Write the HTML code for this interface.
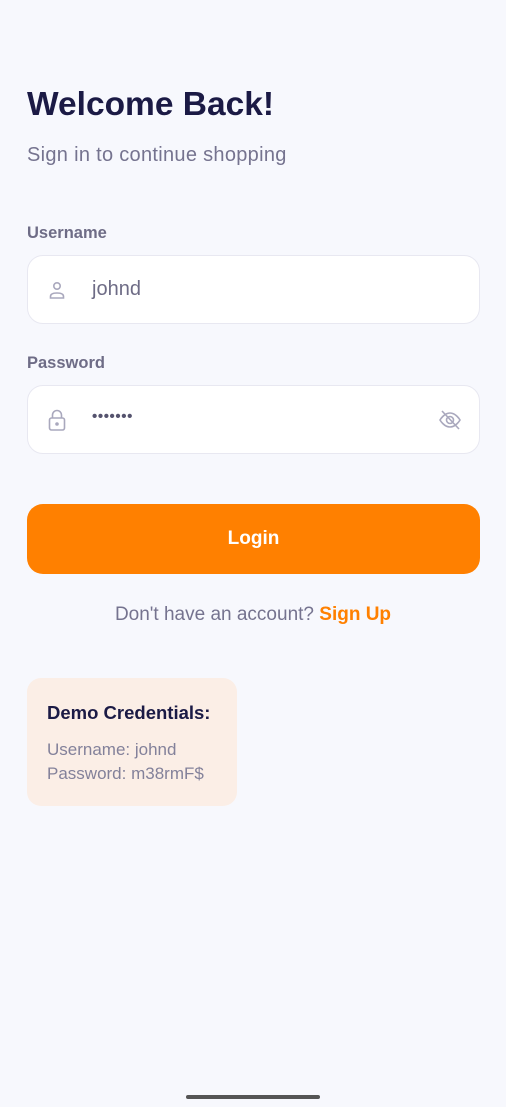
<!DOCTYPE html>
<html><head><meta charset="utf-8"><style>
*{margin:0;padding:0;box-sizing:border-box}
body{width:506px;height:1107px;background:#f7f8fd;font-family:"Liberation Sans",sans-serif;position:relative;overflow:hidden}
.a{position:absolute}
h1{position:absolute;left:27px;top:86px;font-size:33.5px;font-weight:bold;color:#1b1a45;letter-spacing:0px}
.sub{left:27px;top:144px;font-size:20px;color:#75738f;letter-spacing:0.3px}
.lbl{left:27px;font-size:16.5px;color:#6e6c86;font-weight:bold}
.box{left:27px;width:453px;height:69px;background:#fff;border:1px solid #e8e8f1;border-radius:16px}
.btn{left:27px;top:504px;width:453px;height:70px;background:#ff8000;border-radius:16px;color:#fff;font-weight:bold;font-size:19px;text-align:center;line-height:70px}
.card{left:27px;top:678px;width:210px;height:128px;background:#fbeee6;border-radius:14px}
</style></head><body>
<h1>Welcome Back!</h1>
<div class="a sub">Sign in to continue shopping</div>
<div class="a lbl" style="top:224px">Username</div>
<div class="a box" style="top:255px">
<svg class="a" style="left:19px;top:24px" width="20" height="20" viewBox="0 0 20 20" fill="none" stroke="#a9a8bd" stroke-width="1.6"><circle cx="10" cy="6" r="3.2"/><path d="M3.5 18v-1.5c0-2 2-3.5 6.5-3.5s6.5 1.5 6.5 3.5V18z"/></svg>
<div class="a" style="left:64px;top:22px;font-size:20px;color:#6e6c86">johnd</div>
</div>
<div class="a lbl" style="top:354px">Password</div>
<div class="a box" style="top:385px">
<svg class="a" style="left:19px;top:22px" width="20" height="24" viewBox="0 0 20 24" fill="none" stroke="#a9a8bd" stroke-width="1.6"><path d="M5.5 10V7a4.5 4.5 0 0 1 9 0v3"/><rect x="2.5" y="10" width="15" height="12" rx="2"/><circle cx="10" cy="16" r="1" fill="#a9a8bd"/></svg>
<div class="a" style="left:64px;top:22px;font-size:15px;color:#55536e;letter-spacing:0.6px;font-weight:bold">•••••••</div>
<svg class="a" style="left:410px;top:23px" width="24" height="22" viewBox="0 0 24 22" fill="none" stroke="#a9a8bd" stroke-width="1.6"><path d="M2 11s4-7 10-7 10 7 10 7-4 7-10 7S2 11 2 11z"/><circle cx="12" cy="11" r="3.5"/><path d="M4 2l17 18"/></svg>
</div>
<div class="a btn">Login</div>
<div class="a" style="left:0;width:506px;top:604px;text-align:center;font-size:19px;color:#75738f">Don't have an account? <b style="color:#ff8000">Sign Up</b></div>
<div class="a card">
<div class="a" style="left:20px;top:24px;font-size:18.5px;font-weight:bold;color:#1b1a45">Demo Credentials:</div>
<div class="a" style="left:20px;top:60px;font-size:17px;color:#83819a;line-height:24px">Username: johnd<br>Password: m38rmF$</div>
</div>
<div class="a" style="left:186px;top:1095px;width:134px;height:4px;background:#555;border-radius:2px"></div>
</body></html>
